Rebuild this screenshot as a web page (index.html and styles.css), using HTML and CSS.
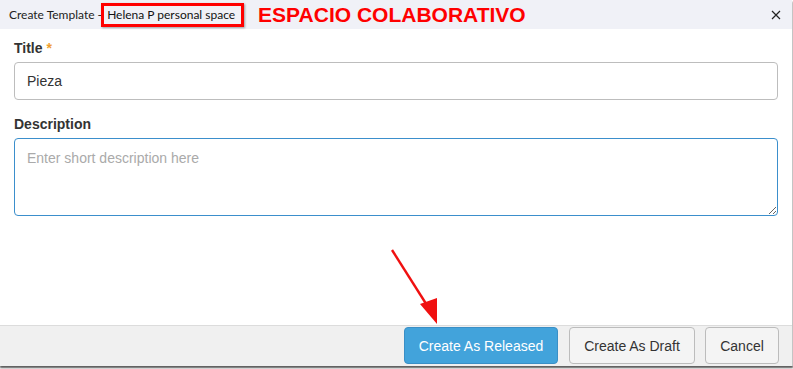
FILE: index.html
```html
<!DOCTYPE html>
<html lang="en">
<head>
	<meta charset="UTF-8">
	<title>Create Template</title>
	<link rel="stylesheet" href="styles.css">
</head>
<body>
	<div class="dialog">
		<header class="dialog-head">
			<span class="head-title">Create Template - </span>
			<span class="head-space">Helena P personal space</span>
			<span class="head-note">ESPACIO COLABORATIVO</span>
			<span class="head-close">
				<svg width="10" height="10" viewBox="0 0 10 10"><path d="M1 1L9 9M9 1L1 9" stroke="#222" stroke-width="1.2" fill="none"/></svg>
			</span>
		</header>

		<section class="dialog-body">
			<label class="field-label">Title <em>*</em></label>
			<input class="field-input" type="text" value="Pieza">

			<label class="field-label field-gap">Description</label>
			<textarea class="field-area" placeholder="Enter short description here"></textarea>
		</section>

		<footer class="dialog-foot">
			<button class="btn btn-primary">Create As Released</button>
			<button class="btn btn-draft">Create As Draft</button>
			<button class="btn btn-cancel">Cancel</button>
		</footer>

		<svg class="arrow" width="80" height="90" viewBox="0 0 80 90">
			<path d="M12 2L50 62" stroke="#f01010" stroke-width="2.4" fill="none"/>
			<path d="M40 56L57 76L57 50Z" fill="#f01010"/>
		</svg>
	</div>
</body>
</html>
```

FILE: styles.css
```css
html, body {
	margin: 0;
	height: 100%;
	background: #fff;
}

body {
	font: 14px "Liberation Sans", Arial, sans-serif;
	color: #333;
}

.dialog {
	position: relative;
	display: flex;
	flex-direction: column;
	height: 366px;
	background: #fff;
	border-right: 1px solid #c4c4c4;
	border-top-right-radius: 4px;
	box-shadow: 0 2px 2px rgba(0, 0, 0, .65);
}

.dialog-head {
	display: flex;
	align-items: center;
	height: 29px;
	padding: 0 0 0 9px;
	background: #f0f1f7;
	font: 12px Lato, "Noto Sans", sans-serif;
	color: #222;
	white-space: pre;
}

.head-space {
	margin-left: -4px;
	padding: 0 6px 0 3px;
	height: 18px;
	line-height: 18px;
	border: 3px solid #f00;
	box-shadow: 1px 1px 2px rgba(0, 0, 0, .35);
	color: #111;
}

.head-note {
	margin-left: 14px;
	font: bold 21px "Liberation Sans", Arial, sans-serif;
	color: #f00;
}

.head-close {
	display: flex;
	margin-left: auto;
	margin-right: 11px;
}

.dialog-body {
	flex: 1;
	display: flex;
	flex-direction: column;
	padding: 9px 14px 0;
}

.field-label {
	display: block;
	height: 20px;
	line-height: 20px;
	margin-bottom: 4px;
	font-weight: bold;
	color: #333;
}

.field-label em {
	font-style: normal;
	color: #f0a030;
}

.field-gap {
	margin-top: 14px;
}

.field-input,
.field-area {
	box-sizing: border-box;
	width: 100%;
	margin: 0;
	padding: 0 12px;
	border: 1px solid #bdbdbd;
	border-radius: 4px;
	font: 14px "Liberation Sans", Arial, sans-serif;
	color: #333;
	outline: none;
}

.field-input {
	height: 38px;
}

.field-area {
	height: 78px;
	padding-top: 11px;
	border-color: #3b8fcc;
	resize: vertical;
}

.field-area::placeholder {
	color: #aaa;
}

.dialog-foot {
	display: flex;
	justify-content: flex-end;
	gap: 10px;
	height: 38px;
	padding: 1px 13px 1px;
	background: #f0f0f0;
	border-top: 1px solid #dcdcdc;
}

.btn {
	height: 37px;
	padding: 0;
	border: 1px solid #bcbcbc;
	border-radius: 4px;
	background: #f4f4f4;
	font: 14px "Liberation Sans", Arial, sans-serif;
	color: #333;
}

.btn-primary {
	width: 154px;
	margin-right: 1px;
	background: #42a3db;
	border-color: #3a8fc6;
	color: #fff;
}

.btn-draft {
	width: 126px;
}

.btn-cancel {
	width: 74px;
}

.arrow {
	position: absolute;
	left: 380px;
	top: 248px;
}
```
